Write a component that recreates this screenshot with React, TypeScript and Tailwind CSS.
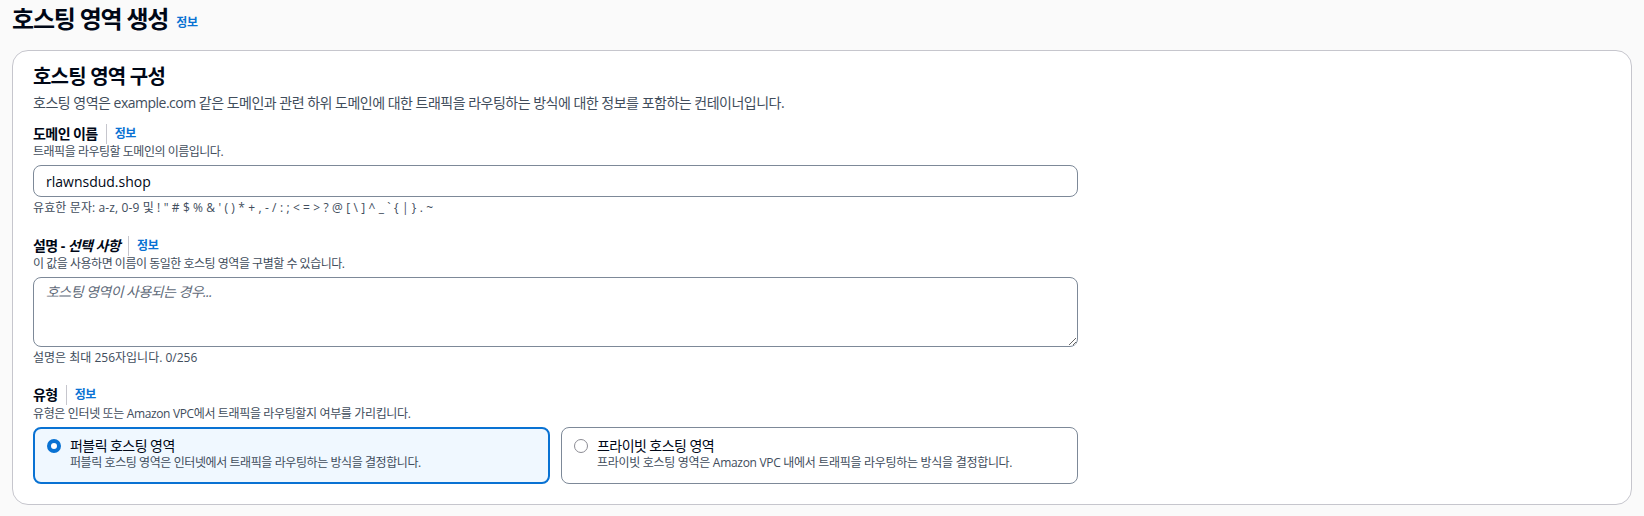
import React from "react";

const font = { fontFamily: '"Open Sans", "Noto Sans CJK KR", sans-serif' };

function InfoLink() {
  return <span className="text-[12px] font-bold text-[#0972d3] leading-[16px] tracking-[-0.03em]">정보</span>;
}

function Label({ children }: { children: React.ReactNode }) {
  return (
    <div className="flex items-center h-[20px]">
      <span className="text-[14px] font-bold text-[#000716] leading-[20px] tracking-[-0.04em]">{children}</span>
      <span className="mx-[8px] w-px h-[20px] bg-[#c6c6cd]" />
      <InfoLink />
    </div>
  );
}

export default function App() {
  return (
    <div className="min-h-[516px] bg-[#fafafa] px-3" style={font}>
      <div className="flex items-center h-[38px]">
        <h1 className="text-[24px] font-bold text-[#000716] leading-[30px] tracking-[-0.05em]">호스팅 영역 생성</h1>
        <span className="ml-[8px] mt-[4px]"><InfoLink /></span>
      </div>
      <div className="mt-[12px] rounded-2xl border border-[#c6c6cd] bg-white px-5 pt-[14px] pb-[20px]">
        <h2 className="text-[20px] font-bold text-[#000716] leading-[24px] tracking-[-0.04em]">호스팅 영역 구성</h2>
        <p className="mt-[4px] text-[14px] leading-[20px] text-[#414d5c] tracking-[-0.036em]">
          호스팅 영역은 example.com 같은 도메인과 관련 하위 도메인에 대한 트래픽을 라우팅하는 방식에 대한 정보를 포함하는 컨테이너입니다.
        </p>

        <div className="w-[1045px]">
          <div className="mt-[11px]">
            <Label>도메인 이름</Label>
            <div className="text-[12px] leading-[16px] text-[#414d5c] tracking-[-0.04em]">트래픽을 라우팅할 도메인의 이름입니다.</div>
            <div className="mt-[5px] h-[32px] rounded-lg border border-[#7d8998] bg-white flex items-center px-[12px] text-[14px] text-[#000716]">
              rlawnsdud.shop
            </div>
            <div className="mt-[3px] text-[12px] leading-[16px] text-[#414d5c] tracking-[0.01em]">
              유효한 문자: a-z, 0-9 및 ! " # $ % &amp; ' ( ) * + , - / : ; &lt; = &gt; ? @ [ \ ] ^ _ ` {"{"} | {"}"} . ~
            </div>
          </div>

          <div className="mt-[20px]">
            <Label>
              설명 - <i>선택 사항</i>
            </Label>
            <div className="text-[12px] leading-[16px] text-[#414d5c] tracking-[-0.04em]">이 값을 사용하면 이름이 동일한 호스팅 영역을 구별할 수 있습니다.</div>
            <textarea
              className="mt-[5px] block w-full h-[70px] rounded-lg border border-[#7d8998] bg-white px-[12px] py-[4px] text-[14px] leading-[20px] text-[#000716] tracking-[-0.04em] placeholder:italic placeholder:text-[#5f6b7a] outline-none"
              placeholder="호스팅 영역이 사용되는 경우..."
              style={font}
            />
            <div className="mt-[3px] text-[12px] leading-[16px] text-[#414d5c]">설명은 최대 256자입니다. 0/256</div>
          </div>

          <div className="mt-[19px]">
            <Label>유형</Label>
            <div className="mt-[1px] text-[12px] leading-[16px] text-[#414d5c] tracking-[-0.03em]">유형은 인터넷 또는 Amazon VPC에서 트래픽을 라우팅할지 여부를 가리킵니다.</div>
            <div className="mt-[5px] grid grid-cols-2 gap-[11px]">
              <div className="h-[57px] rounded-lg border-2 border-[#0972d3] bg-[#f0f8ff] pl-[12px] pt-[8px] flex gap-[9px]">
                <span className="mt-[2px] w-[14px] h-[14px] rounded-full border-[4px] border-[#0972d3] bg-white shrink-0" />
                <div>
                  <div className="text-[14px] leading-[18px] text-[#000716] tracking-[-0.04em]">퍼블릭 호스팅 영역</div>
                  <div className="text-[12px] leading-[16px] text-[#414d5c] tracking-[-0.035em]">퍼블릭 호스팅 영역은 인터넷에서 트래픽을 라우팅하는 방식을 결정합니다.</div>
                </div>
              </div>
              <div className="h-[57px] rounded-lg border border-[#7d8998] bg-white pl-[12px] pt-[9px] flex gap-[9px]">
                <span className="mt-[2px] w-[14px] h-[14px] rounded-full border-[1.5px] border-[#8c8c94] bg-white shrink-0" />
                <div>
                  <div className="text-[14px] leading-[18px] text-[#000716] tracking-[-0.04em]">프라이빗 호스팅 영역</div>
                  <div className="text-[12px] leading-[16px] text-[#414d5c] tracking-[-0.025em]">프라이빗 호스팅 영역은 Amazon VPC 내에서 트래픽을 라우팅하는 방식을 결정합니다.</div>
                </div>
              </div>
            </div>
          </div>
        </div>
      </div>
    </div>
  );
}
